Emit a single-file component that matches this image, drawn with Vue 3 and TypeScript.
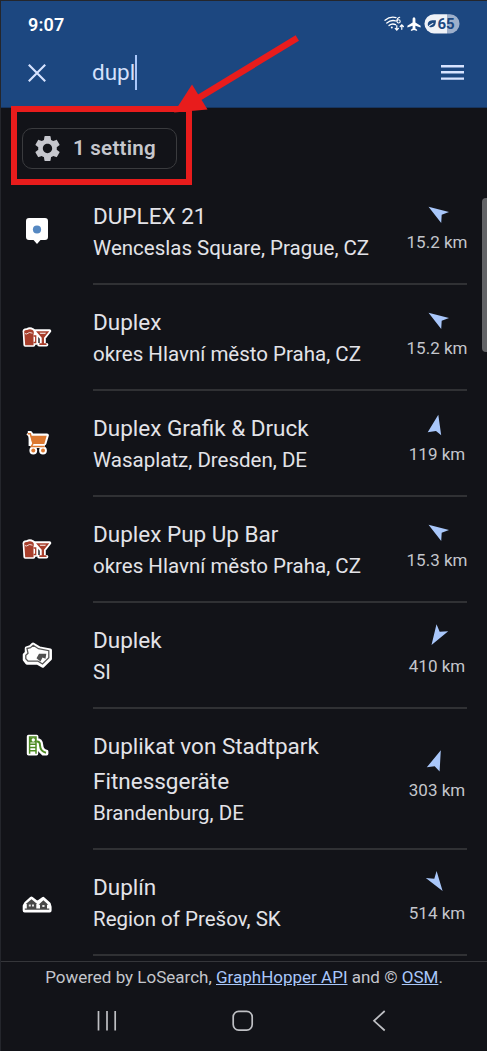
<script setup lang="ts">
type Kind = 'pin' | 'drinks' | 'cart' | 'region' | 'slide' | 'village'

interface Result {
  icon: Kind
  title: string[]
  place: string
  distance: string
  heading: string
}

const results: Result[] = [
  { icon: 'pin', title: ['DUPLEX 21'], place: 'Wenceslas Square, Prague, CZ', distance: '15.2 km', heading: '5.5,6.7 26,12 18.7,14.7 18.2,23' },
  { icon: 'drinks', title: ['Duplex'], place: 'okres Hlavní město Praha, CZ', distance: '15.2 km', heading: '5.5,6.7 26,12 18.7,14.7 18.2,23' },
  { icon: 'cart', title: ['Duplex Grafik & Druck'], place: 'Wasaplatz, Dresden, DE', distance: '119 km', heading: '15.3,2.7 18.2,23.3 13,19 4.7,20.3' },
  { icon: 'drinks', title: ['Duplex Pup Up Bar'], place: 'okres Hlavní město Praha, CZ', distance: '15.3 km', heading: '5.5,6.7 26,12 18.7,14.7 18.2,23' },
  { icon: 'region', title: ['Duplek'], place: 'SI', distance: '410 km', heading: '13.5,0.2 16.7,7.7 25.2,7.3 8.5,21' },
  { icon: 'slide', title: ['Duplikat von Stadtpark', 'Fitnessgeräte'], place: 'Brandenburg, DE', distance: '303 km', heading: '17.8,2.3 16.6,23.4 11.7,18.3 3.8,19.3' },
  { icon: 'village', title: ['Duplín'], place: 'Region of Prešov, SK', distance: '514 km', heading: '13.6,0 19.6,20 2.8,7.1 11.3,7.7' },
]
</script>

<template>
  <div class="phone">
    <header class="top">
      <div class="status">
        <span class="clock">9:07</span>
        <svg class="status-icons" width="78" height="22" viewBox="382 13 78 22">
          <g fill="none" stroke="#fff" stroke-width="1.3" stroke-linecap="round">
            <path d="M385 20.3Q390 16 396 17.6" />
            <path d="M386.8 23Q391 19.4 396 21" />
            <path d="M389 25.6Q392 23 395.6 24.7" />
            <path d="M399.7 17.2Q397.2 17.8 396.8 20.8" stroke-width="1.1" />
            <circle cx="398.6" cy="21.4" r="1.6" stroke-width="1.1" />
            <path d="M396.8 25.6V30M395.2 28.4l1.6 1.7 1.6-1.7M401.8 29.3V25M400.2 26.5l1.6-1.7 1.6 1.7" stroke-width="1.2" />
          </g>
          <circle cx="391.8" cy="27.5" r="1" fill="#fff" />
          <path d="M414 17.2c.9 0 1.4 1 1.4 2v3.2l5.2 3.3v1.7l-5.2-1.6v2.7l1.7 1.3v1.2l-3.1-.9-3.1.9v-1.2l1.7-1.3v-2.7l-5.2 1.6v-1.7l5.2-3.3v-3.2c0-1 .5-2 1.4-2z" fill="#fff" />
          <path d="M434 14.3H447V33.4H434A9.55 9.55 0 0 1 434 14.3z" fill="#eff2f8" />
          <path d="M447 14.3H450A9.55 9.55 0 0 1 450 33.4H447z" fill="#9dafcb" />
          <path d="M427.8 25c-.2-4.200 2.800-5.100 8.100-4.700 .1 4.900-1.900 7.500-5.800 6.900-1-.1-1.900-.9-2.300-2.200z" fill="#1c4780" />
          <path d="M427.300 28.300c1.800-2.800 3.500-3.900 6-5" fill="none" stroke="#eff2f8" stroke-width="1.100" />
          <text x="437.400" y="29.300" class="charge">65</text>
        </svg>
      </div>
      <div class="search">
        <svg class="close" width="20" height="20" viewBox="0 0 20 20"><path d="M1.800 1.800 18.200 18.200M18.200 1.800 1.800 18.200" /></svg>
        <span class="query">dupl</span><span class="caret"></span>
        <svg class="menu" width="23" height="15" viewBox="0 0 23 15">
          <path d="M0 0H23V2.400H0zM0 6H23V8.400H0zM0 12.400H23V14.800H0z" fill="#d7e3ff" />
        </svg>
      </div>
    </header>

    <div class="filters">
      <button class="chip">
        <svg width="31" height="31" viewBox="0 0 24 24">
          <path d="M19.140 12.940c.04-.3.060-.61.060-.94 0-.32-.02-.64-.07-.94l2.030-1.580c.18-.14.23-.41.120-.61l-1.920-3.320c-.12-.22-.37-.29-.59-.22l-2.390.96c-.5-.38-1.030-.7-1.620-.94l-.36-2.540c-.04-.24-.24-.41-.48-.41h-3.840c-.24 0-.43.17-.47.410l-.36 2.540c-.59.240-1.130.570-1.620.940l-2.390-.96c-.22-.08-.47 0-.59.220L2.740 8.870c-.12.210-.08.470.120.610l2.030 1.580c-.05.300-.09.630-.09.940s.020.640.070.940l-2.030 1.580c-.18.140-.23.410-.12.610l1.920 3.320c.12.220.37.290.59.220l2.390-.96c.5.380 1.030.700 1.620.940l.36 2.540c.05.240.24.410.48.410h3.840c.24 0 .44-.17.470-.41l.36-2.540c.59-.24 1.130-.56 1.620-.94l2.390.96c.22.080.47 0 .59-.22l1.920-3.320c.12-.22.070-.47-.12-.61l-2.010-1.580zM12 15.600c-1.980 0-3.600-1.620-3.600-3.600s1.620-3.600 3.600-3.600 3.600 1.620 3.600 3.600-1.620 3.600-3.600 3.600z" />
        </svg>
        <span>1 setting</span>
      </button>
    </div>

    <main class="list">
      <article v-for="(r, i) in results" :key="i" class="row">
        <svg class="poi" width="60" height="60" viewBox="0 0 60 60">
          <g v-if="r.icon === 'pin'" transform="translate(0 4)">
            <path d="M19 13H35Q38 13 38 16V32Q38 35 35 35H30.500L27 39 23.500 35H19Q16 35 16 32V16Q16 13 19 13z" fill="#fff" />
            <circle cx="27" cy="24.500" r="4.100" fill="#5588c2" />
          </g>
          <g v-else-if="r.icon === 'drinks'" transform="translate(0 3)">
            <g stroke="#fff" stroke-width="3.600" stroke-linejoin="round" fill="#fff">
              <path d="M14.500 22.500Q13.500 19.800 17 20Q20 18.300 22.500 20Q25 21 24 24.500H26.500V33H23.500V35H15.200z" />
              <path d="M25.500 21H39.500L34 28V33L36.500 34.800H29L31.500 33V28z" />
            </g>
            <path d="M14.300 22.500Q13.500 19.800 17 20Q20 18.500 22.500 20Q24.500 21 23.500 24.500V35.300H15.200z" fill="#a83e2b" />
            <path d="M23.500 26H25.700V32.500H23.500" fill="none" stroke="#a83e2b" stroke-width="1.300" />
            <path d="M15 23.600Q17 24.600 18 23.200T22.500 23.200" fill="none" stroke="#fff" stroke-width=".8" />
            <path d="M26 21.300H39.300L34 27.800V33.300H36.500V35H29.300V33.300H31.700V27.800z" fill="#a83e2b" />
            <path d="M29.500 22.700H36L35.200 23.700H30.300z" fill="#fff" />
          </g>
          <g v-else-if="r.icon === 'cart'" transform="translate(0 2)">
            <g fill="#fff" stroke="#fff" stroke-width="3.800" stroke-linejoin="round">
              <path d="M17.800 18H20.500L22 20.300H37L34.500 28.500H22.500V31H35M17.800 18L20.500 21V31" />
              <circle cx="23.300" cy="35.500" r="2" /><circle cx="33" cy="35.500" r="2" />
            </g>
            <path d="M20.500 20.800H36.700L34.300 29H22.500z" fill="#dd7930" />
            <path d="M17.800 18.700H20.300L23 28.500L21.300 31.600H34.800" fill="none" stroke="#dd7930" stroke-width="1.500" />
            <circle cx="23.300" cy="35.500" r="2" fill="#dd7930" /><circle cx="33" cy="35.500" r="2" fill="#dd7930" />
          </g>
          <g v-else-if="r.icon === 'region'" transform="translate(0 .7)">
            <path d="M16.500 22.500L20.200 21.300 23 18.500 29.500 22.500 40.200 24.500V33L32.800 40.300 27.500 37.200H17L14.500 34V29L16.500 27z" fill="#fff" stroke="#fff" stroke-width="3.500" stroke-linejoin="round" />
            <path d="M17 22.800L20.500 22 23.200 19.600 28.500 23 38.800 25V32L32.500 38.300 28 35.500H18L15.800 33V29.500L18 27.500z" fill="#fff" stroke="#555" stroke-width="1.300" />
            <path d="M29 28H36.300L35.500 33L32.500 31.800 30.500 35.800 26.500 32.500z" fill="#505050" />
          </g>
          <g v-else-if="r.icon === 'slide'" transform="translate(0 -11)">
            <path d="M18.500 16.500H26.700V19.800Q31.200 20 31.500 25Q32 31 36.700 31.500V33.800H33Q30 32 28.500 28L26.500 25.500V33.800H18.500z" fill="#fff" stroke="#fff" stroke-width="3.400" stroke-linejoin="round" />
            <path d="M19.600 33.700V17H26V33.700M20 24.300H26M20 27.500H26M20 30.800H26" fill="none" stroke="#4d8a22" stroke-width="1.500" />
            <path d="M20 17.500H26V22.500H20z" fill="#4d8a22" /><circle cx="23.300" cy="20" r="1.700" fill="#fff" />
            <path d="M26.500 21.500Q30 21 30 25.500Q30.500 31.500 36 32.700" fill="none" stroke="#4d8a22" stroke-width="2" />
          </g>
          <g v-else transform="translate(0 3)">
            <path d="M14.600 35.600V31L16 28.500 21.500 23.500 27.300 28 33.200 23.800 38.800 28.800 39.700 32V35.600z" fill="#fff" stroke="#fff" stroke-width="3.800" stroke-linejoin="round" />
            <path d="M14.800 34.800V33.600H16.800V29H15.800L21.500 24.200 27.200 29H26.300V33.600H30V29.800H28.600L33.400 25.300 38.300 29.800H37V33.600H39.300V34.800z" fill="#484848" />
            <path d="M18.800 29.500H20.800V31.500H18.800zM22 29.500H24V31.500H22zM32.300 30H34.500V32H32.300z" fill="#e4e4e4" />
          </g>
        </svg>
        <div class="body">
          <div class="texts">
            <div v-for="line in r.title" :key="line" class="title">{{ line }}</div>
            <div class="place">{{ r.place }}</div>
          </div>
          <div class="meta">
            <svg width="28" height="28" viewBox="0 0 28 28"><polygon :points="r.heading" fill="#a9c7fa" /></svg>
            <span>{{ r.distance }}</span>
          </div>
        </div>
      </article>
    </main>

    <footer class="credits">Powered by LoSearch, <a>GraphHopper API</a> and © <a>OSM</a>.</footer>
    <nav class="nav">
      <svg width="487" height="30" viewBox="0 0 487 30" fill="none" stroke="#bfc0c4" stroke-width="1.700">
        <path d="M98.500 5V24.500M107 5V24.500M115.200 5V24.500" />
        <rect x="233.200" y="5.400" width="19" height="18.700" rx="5.500" />
        <path d="M384.700 5 374 14.800 384.700 24.500" />
      </svg>
    </nav>

    <div class="scrollbar"></div>
    <div class="highlight"></div>
    <svg class="pointer" width="140" height="90" viewBox="165 30 140 90">
      <path d="M297.300 38 196 99.500" stroke="#e81c1c" stroke-width="6.500" />
      <path d="M174 112.500 192 84.500 207.500 109.500z" fill="#e81c1c" />
    </svg>
  </div>
</template>

<style scoped>
.phone {
  position: relative;
  box-sizing: border-box;
  width: 487px;
  height: 1051px;
  overflow: hidden;
  border-top: 1px solid #24262c;
  border-left: 1px solid #24262c;
  background: #121318;
  color: #e3e3e8;
  font-family: Roboto, 'Noto Sans', sans-serif;
  display: flex;
  flex-direction: column;
}
.top {
  flex: none;
  box-sizing: border-box;
  height: 107px;
  background: #1c4780;
  border-bottom: 1px solid #17355f;
}
.status {
  height: 46px;
  padding: 0 27px 0 27px;
  display: flex;
  align-items: center;
  justify-content: space-between;
}
.clock {
  font-size: 18px;
  font-weight: 600;
  color: #fff;
  letter-spacing: 0.2px;
}
.charge {
  font: 700 15px Roboto, sans-serif;
  fill: #1c4780;
}
.search {
  height: 51px;
  display: flex;
  align-items: center;
  padding: 0 23px 0 26px;
}
.close {
  stroke: #d7e3ff;
  stroke-width: 2.1;
  fill: none;
  margin-right: 45px;
}
.query {
  font-size: 22.5px;
  line-height: 35px;
  color: #d5e1fb;
}
.caret {
  width: 2px;
  height: 35px;
  background: #a9c7fa;
}
.menu {
  margin-left: auto;
}
.filters {
  flex: none;
  height: 71px;
  box-sizing: border-box;
  padding: 20px 0 0 21px;
}
.chip {
  box-sizing: border-box;
  width: 155px;
  height: 41px;
  border: 1px solid #3a3b3e;
  border-radius: 10px;
  background: transparent;
  padding: 0 0 0 9px;
  display: flex;
  align-items: center;
  gap: 10px;
  color: #c6c7cd;
  font: 600 20.5px Roboto, sans-serif;
  letter-spacing: 0.25px;
}
.chip span {
  margin-top: -1px;
}
.chip svg {
  fill: #c6c7cd;
  flex: none;
}
.list {
  flex: none;
}
.row {
  display: flex;
  align-items: flex-start;
}
.poi {
  flex: none;
  margin: 22px 22px 0 9px;
}
.body {
  flex: none;
  box-sizing: border-box;
  width: 374px;
  margin-left: 1px;
  border-bottom: 2px solid #303134;
  padding: 20px 0;
  display: flex;
  justify-content: space-between;
}
.title {
  font-size: 22.5px;
  line-height: 35px;
  white-space: nowrap;
}
.place {
  font-size: 20.5px;
  line-height: 29px;
  white-space: nowrap;
}
.meta {
  width: 60px;
  margin-bottom: 8px;
  display: flex;
  flex-direction: column;
  align-items: center;
  justify-content: center;
  gap: 2px;
}
.meta span {
  font-size: 17px;
  line-height: 24px;
  color: #c4c6cc;
  white-space: nowrap;
}
.credits {
  flex: none;
  box-sizing: border-box;
  height: 36px;
  margin-top: 5px;
  border-top: 1px solid #35363a;
  text-align: center;
  font-size: 17px;
  line-height: 30px;
  color: #c4c6cc;
  white-space: nowrap;
}
.credits a {
  color: #a9c7fa;
  text-decoration: underline;
}
.nav {
  margin-top: 9px;
  margin-left: -1px;
}
.nav svg {
  display: block;
}
.scrollbar {
  position: absolute;
  right: 0;
  top: 197px;
  width: 5px;
  height: 154px;
  border-radius: 4px 0 0 4px;
  background: #626366;
}
.highlight {
  position: absolute;
  left: 10px;
  top: 105px;
  box-sizing: border-box;
  width: 181px;
  height: 79px;
  border: 6px solid #e81c1c;
}
.pointer {
  position: absolute;
  left: 164px;
  top: 29px;
}
</style>

<style>
body {
  background: #121318;
}
</style>
